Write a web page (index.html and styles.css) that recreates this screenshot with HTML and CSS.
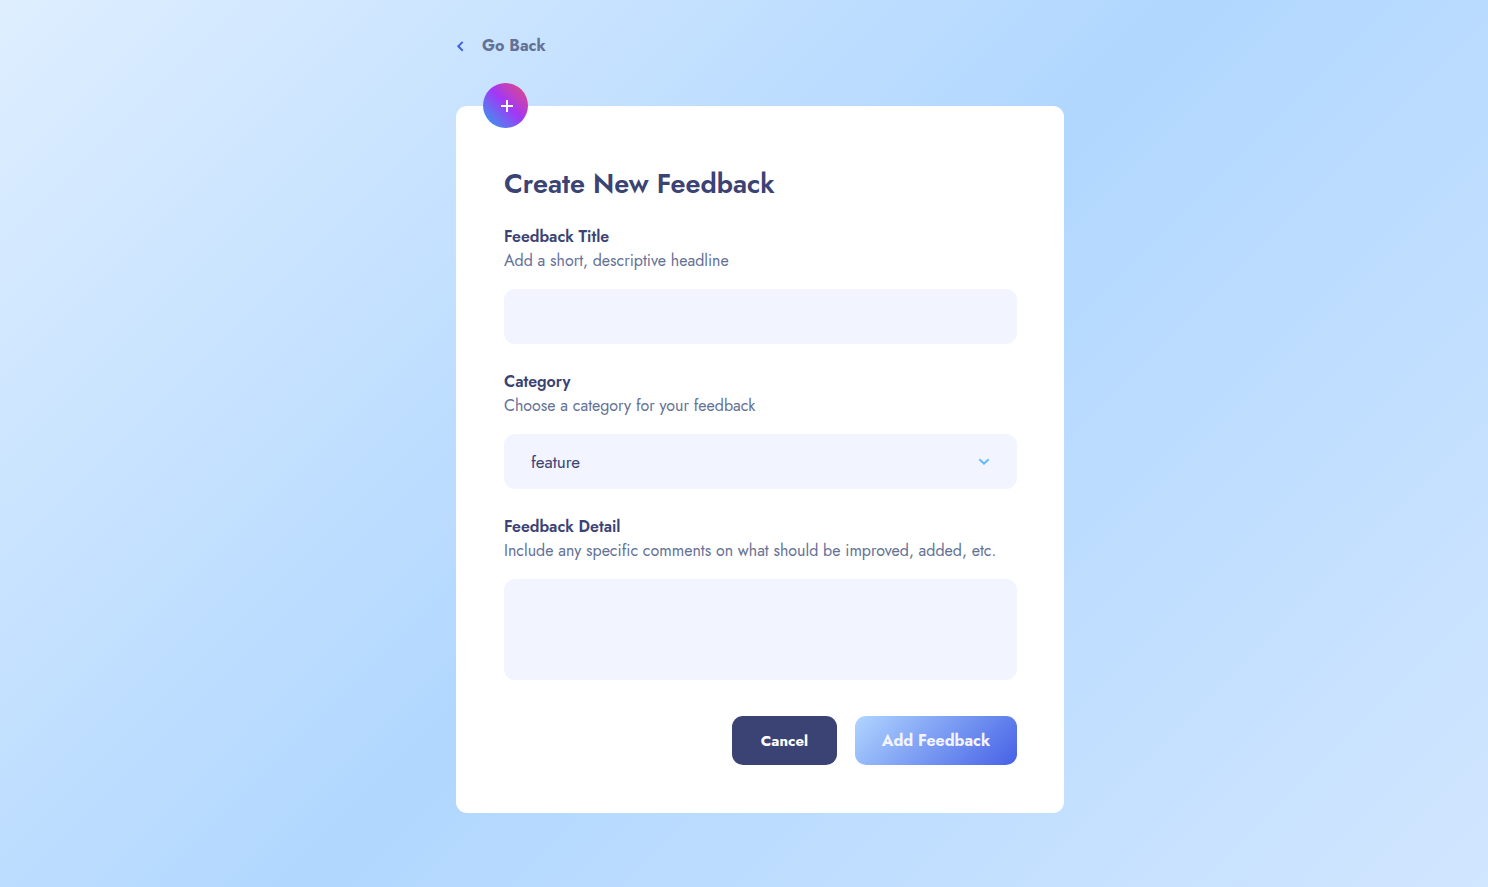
FILE: index.html
```html
<!DOCTYPE html>
<html lang="en">
<head>
<meta charset="utf-8">
<meta name="viewport" content="width=device-width, initial-scale=1">
<title>Create New Feedback</title>
<link rel="stylesheet" href="styles.css">
</head>
<body>
<main class="page">
  <a class="back" href="#">
    <svg class="back-icon" viewBox="0 0 8 12" aria-hidden="true"><path d="M6.7 1.9 2.3 6.3l4.4 4.4"/></svg>
    Go Back
  </a>
  <form class="card">
    <span class="badge">
      <svg class="badge-icon" viewBox="0 0 14 14" aria-hidden="true"><path d="M7 1v12M1 7h12"/></svg>
    </span>
    <h1 class="title">Create New Feedback</h1>
    <div class="field">
      <label class="label" for="title">Feedback Title</label>
      <p class="hint" id="title-hint">Add a short, descriptive headline</p>
      <input class="control" id="title" type="text" aria-describedby="title-hint">
    </div>
    <div class="field">
      <label class="label" for="category">Category</label>
      <p class="hint" id="category-hint">Choose a category for your feedback</p>
      <div class="select-wrap">
        <select class="control" id="category" aria-describedby="category-hint">
          <option>feature</option>
        </select>
        <svg class="chevron" viewBox="0 0 12 8" aria-hidden="true"><path d="m1.3 1.3 4.7 4.3 4.7-4.3"/></svg>
      </div>
    </div>
    <div class="field">
      <label class="label" for="detail">Feedback Detail</label>
      <p class="hint" id="detail-hint">Include any specific comments on what should be improved, added, etc.</p>
      <textarea class="control control-tall" id="detail" aria-describedby="detail-hint"></textarea>
    </div>
    <div class="actions">
      <button class="button button-dark" type="button">Cancel</button>
      <button class="button button-primary" type="submit">Add Feedback</button>
    </div>
  </form>
</main>
</body>
</html>
```
FILE: styles.css
```css
* {
  box-sizing: border-box;
}

body {
  margin: 0;
  min-height: 100vh;
  padding: 32px 0 72px 32px;
  background: linear-gradient(135deg, #deeeff, #b1d7ff 50%, #d1e6ff);
  color: #3a4374;
  font-family: Jost, Lato, sans-serif;
  font-size: 16px;
  line-height: 24px;
}

.page {
  max-width: 608px;
  margin: 0 auto;
}

.back {
  display: inline-flex;
  align-items: center;
  gap: 18px;
  height: 28px;
  color: #647196;
  font-weight: 700;
  text-decoration: none;
}

.back-icon {
  width: 8px;
  height: 12px;
  fill: none;
  stroke: #4661e6;
  stroke-width: 2;
}

.card {
  position: relative;
  margin-top: 46px;
  padding: 60px 47px 48px 48px;
  border-radius: 11px;
  background: #fff;
}

.badge {
  position: absolute;
  top: -23px;
  left: 27px;
  display: flex;
  align-items: center;
  justify-content: center;
  width: 45px;
  height: 45px;
  padding-left: 3px;
  border-radius: 50%;
  background: linear-gradient(45deg, #28a7ed, #a337f6 53%, #e84d70);
}

.badge-icon {
  width: 14px;
  height: 14px;
  fill: none;
  stroke: #fff;
  stroke-width: 2;
}

.title {
  margin: 0 0 23px;
  font-size: 27px;
  line-height: 36px;
  font-weight: 600;
}

.field {
  display: flex;
  flex-direction: column;
  margin-bottom: 26px;
}

.label {
  font-weight: 600;
}

.hint {
  margin: 0 0 16px;
  color: #647196;
}

.control {
  display: block;
  width: 100%;
  height: 55px;
  padding: 0 27px;
  border: 0;
  border-radius: 11px;
  background: #f2f4ff;
  color: #3a4374;
  font: inherit;
  font-size: 17px;
  appearance: none;
}

.control-tall {
  height: 101px;
  padding: 16px 27px;
  resize: none;
}

.select-wrap {
  display: grid;
  align-items: center;
}

.select-wrap > * {
  grid-area: 1 / 1;
}

.chevron {
  justify-self: end;
  width: 12px;
  height: 8px;
  margin-right: 27px;
  fill: none;
  stroke: #62bcfa;
  stroke-width: 2;
  pointer-events: none;
}

.actions {
  display: flex;
  flex-wrap: wrap;
  justify-content: flex-end;
  gap: 18px;
  padding-top: 10px;
}

.button {
  height: 49px;
  padding: 0 26px;
  border: 0;
  border-radius: 11px;
  color: #f2f4ff;
  font: inherit;
  font-weight: 700;
  cursor: pointer;
}

.button-dark {
  min-width: 105px;
  background: #3a4374;
  color: #fff;
  font-size: 15px;
}

.button-primary {
  min-width: 162px;
  background: linear-gradient(135deg, #b0d6ff, #4661e6);
}
```
